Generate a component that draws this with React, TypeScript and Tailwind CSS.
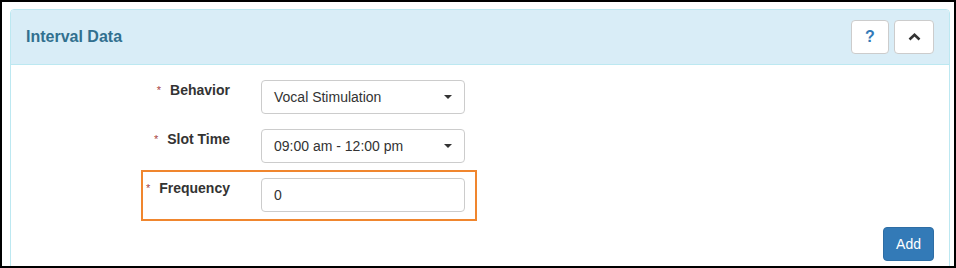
import React from "react";

const Caret = () => (
  <svg width="8" height="4" viewBox="0 0 8 4" className="shrink-0">
    <path d="M0 0 L8 0 L4 4 Z" fill="#333" />
  </svg>
);

function Row({
  label,
  highlight,
  first,
  children,
}: {
  label: string;
  highlight?: boolean;
  first?: boolean;
  children: React.ReactNode;
}) {
  return (
    <div
      className={`ml-[115px] flex w-[336px] border-2 pt-[6px] pb-[7px] ${
        highlight ? "border-[#f0862e]" : "border-transparent"
      } ${first ? "" : "-mt-[2px]"}`}
    >
      <div className="flex w-[87px] shrink-0 justify-end text-[14px] font-bold leading-[20px] text-[#333]">
        <span className="mr-[9px] text-[11px] font-normal leading-[20px] text-[#a94442]">*</span>
        <span>{label}</span>
      </div>
      <div className="ml-[31px] w-[204px]">{children}</div>
    </div>
  );
}

function SelectBox({ value }: { value: string }) {
  return (
    <div className="flex h-[34px] w-[204px] items-center justify-between rounded-[4px] border border-[#ccc] bg-white pl-[12px] pr-[12px] text-[14px] text-[#333]">
      <span>{value}</span>
      <Caret />
    </div>
  );
}

export default function App() {
  return (
    <div
      className="h-[268px] w-[956px] overflow-hidden border-2 border-black bg-white pl-[8px] pr-[4px] pt-[7px]"
      style={{ fontFamily: '"Liberation Sans", Arial, sans-serif' }}
    >
      <div className="h-[400px] rounded-[4px] border border-[#bce8f1] bg-white">
        <div className="flex h-[55px] items-center justify-between rounded-t-[3px] border-b border-[#bce8f1] bg-[#d9edf7] px-[15px]">
          <h3 className="text-[16px] font-bold text-[#31708f]">Interval Data</h3>
          <div className="flex gap-[5px]">
            <button className="flex h-[34px] w-[38px] items-center justify-center rounded-[4px] border border-[#ccc] bg-white text-[16px] font-bold text-[#337ab7]">
              ?
            </button>
            <button className="flex h-[34px] w-[40px] items-center justify-center rounded-[4px] border border-[#ccc] bg-white">
              <svg width="13" height="8" viewBox="0 0 13 8">
                <path d="M1.5 6.5 L6.5 1.8 L11.5 6.5" fill="none" stroke="#333" strokeWidth="2.6" />
              </svg>
            </button>
          </div>
        </div>
        <div className="px-[15px] pt-[7px]">
          <Row label="Behavior" first>
            <SelectBox value="Vocal Stimulation" />
          </Row>
          <Row label="Slot Time">
            <SelectBox value="09:00 am - 12:00 pm" />
          </Row>
          <Row label="Frequency" highlight>
            <div className="flex h-[34px] w-[204px] items-center rounded-[4px] border border-[#ccc] bg-white px-[12px] text-[14px] text-[#333]">
              0
            </div>
          </Row>
          <div className="mt-[6px] flex justify-end">
            <button className="h-[34px] rounded-[4px] border border-[#2e6da4] bg-[#337ab7] px-[12px] text-[14px] text-white">
              Add
            </button>
          </div>
        </div>
      </div>
    </div>
  );
}
